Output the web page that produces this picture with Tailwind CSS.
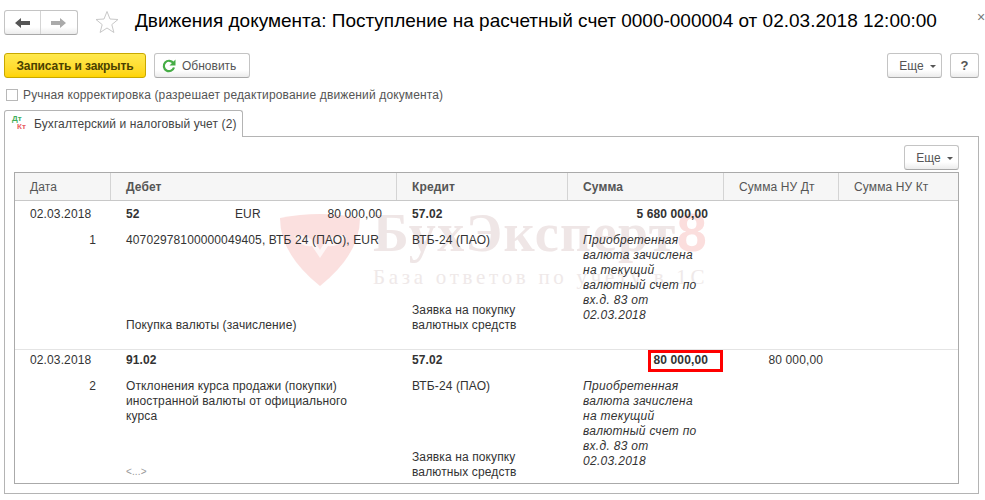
<!DOCTYPE html>
<html lang="ru">
  <head>
    <meta charset="UTF-8" />
    <title>Движения документа</title>
    <script src="https://cdn.jsdelivr.net/npm/@tailwindcss/browser@4"></script>
  </head>
  <body class="bg-white">
    <div class="relative w-[985px] h-[500px] overflow-hidden font-['Liberation_Sans',Arial,sans-serif] text-[12px] text-[#333]">
      <!-- title bar -->
      <div class="flex items-center h-[44px] pl-[4px] pt-[1px]">
        <div class="flex w-[74px] h-[25px] rounded-[3px] border border-[#c4c4c4] border-b-[#a8a8a8] bg-gradient-to-b from-white from-70% to-[#ececec]">
          <div class="flex items-center justify-center w-[36px] border-r border-[#d4d4d4]">
            <svg width="16" height="10" viewBox="0 0 16 10"><path d="M0 5 L6 0 V3 H15 V7 H6 V10 Z" fill="#555"/></svg>
          </div>
          <div class="flex items-center justify-center flex-1">
            <svg width="16" height="10" viewBox="0 0 16 10"><path d="M15 5 L9 0 V3 H0 V7 H9 V10 Z" fill="#aaa"/></svg>
          </div>
        </div>
        <svg class="ml-[17px] -mt-[2px]" width="24" height="24" viewBox="0 0 24 24"><path d="M12 1.500 L15 9 L23 9.500 L16.800 14.600 L18.900 22.500 L12 18 L5.100 22.500 L7.200 14.600 L1 9.500 L9 9 Z" fill="#fff" stroke="#c8c8c8"/></svg>
        <h1 class="ml-[16px] -mt-[3px] text-[19px] text-black whitespace-nowrap">Движения документа: Поступление на расчетный счет 0000-000004 от 02.03.2018 12:00:00</h1>
        <span class="absolute left-[977px] top-[9px] text-[14px] leading-[16px] text-[#777]">×</span>
      </div>

      <!-- command bar -->
      <div class="flex items-center h-[25px] mt-[9px] pl-[4px] pr-[6px]">
        <button class="w-[142px] h-[25px] rounded-[3px] border border-[#c8a800] bg-gradient-to-b from-[#ffe94d] to-[#ffd400] text-[12px] font-bold text-[#4a4100] tracking-[-0.1px]">Записать и закрыть</button>
        <button class="flex items-center ml-[8px] w-[96px] h-[25px] pl-[7px] rounded-[3px] border border-[#c4c4c4] border-b-[#a8a8a8] bg-gradient-to-b from-white from-70% to-[#ececec] text-[#555]">
          <svg width="14" height="14" viewBox="0 0 14 14"><path d="M11.300 4 A5.200 5.200 0 1 0 12 8.500" fill="none" stroke="#46ad46" stroke-width="2.200"/><path d="M13.500 0.500 V6.500 H7.500 Z" fill="#46ad46"/></svg>
          <span class="ml-[6px]">Обновить</span>
        </button>
        <button class="flex items-center justify-center ml-auto w-[55px] h-[25px] pl-[6px] rounded-[3px] border border-[#c4c4c4] border-b-[#a8a8a8] bg-gradient-to-b from-white from-70% to-[#ececec] text-[#555]">
          Еще
          <span class="ml-[6px] mt-[2px] border-x-[3px] border-x-transparent border-t-[3px] border-t-[#555]"></span>
        </button>
        <button class="ml-[8px] w-[29px] h-[25px] rounded-[3px] border border-[#c4c4c4] border-b-[#a8a8a8] bg-gradient-to-b from-white from-70% to-[#ececec] font-bold text-[13px] text-[#555]">?</button>
      </div>

      <!-- checkbox -->
      <label class="flex items-center h-[16px] mt-[9px] pl-[6px] text-[#555] tracking-[0.15px]">
        <span class="w-[12px] h-[12px] border border-[#b8b8b8] bg-white"></span>
        <span class="ml-[5px]">Ручная корректировка (разрешает редактирование движений документа)</span>
      </label>

      <!-- tab -->
      <div class="relative z-10 flex items-center mt-[7px] ml-[4px] w-[239px] h-[27px] pl-[7px] rounded-t-[3px] border border-b-0 border-[#b4b4b4] bg-white">
        <div class="w-[16px] font-bold text-[8px] leading-[8px] -mt-[2px]">
          <div class="text-[#3fae5a]">Дт</div>
          <div class="pl-[5px] text-[#e86060]">Кт</div>
        </div>
        <span class="ml-[6px] text-[#444] tracking-[0.1px]">Бухгалтерский и налоговый учет (2)</span>
      </div>

      <!-- panel -->
      <div class="-mt-px ml-[4px] w-[975px] h-[358px] border border-[#b4b4b4] pt-[8px] pl-[9px] pr-[19px]">
        <div class="flex justify-end h-[25px]">
          <button class="flex items-center justify-center w-[55px] h-[25px] pl-[6px] rounded-[3px] border border-[#c4c4c4] border-b-[#a8a8a8] bg-gradient-to-b from-white from-70% to-[#ececec] text-[#555]">
            Еще
            <span class="ml-[6px] mt-[2px] border-x-[3px] border-x-transparent border-t-[3px] border-t-[#555]"></span>
          </button>
        </div>

        <!-- table -->
        <div class="relative mt-[2px] w-[945px] h-[312px] border border-[#aaa] tracking-[0.12px]">
          <!-- watermark -->
          <div class="absolute left-[265px] top-[41px] pointer-events-none">
            <svg width="80" height="72" viewBox="0 0 80 72">
              <path d="M0 4 Q40 -4 80 4 Q80 40 40 72 Q0 40 0 4 Z" fill="#fbe0df"/>
              <path d="M14 22 Q30 18 40 36 Q50 18 66 22 Q58 34 48 32 L40 44 L32 32 Q22 34 14 22 Z" fill="#fff" opacity="0.7"/>
            </svg>
          </div>
          <div class="absolute left-[358px] top-[32px] pointer-events-none font-['Liberation_Serif',serif] whitespace-nowrap tracking-normal">
            <div class="font-bold text-[54px] leading-[54px] text-[#efe6e6] tracking-[1.4px]">БухЭксперт<span class="text-[#fbdedd] font-['Liberation_Sans',sans-serif]">8</span></div>
            <div class="mt-[5px] text-[21px] leading-[24px] text-[#efe9e9] tracking-[3.700px]">База ответов по учету в 1С</div>
          </div>

          <!-- header -->
          <div class="grid grid-cols-[96px_286px_171px_156px_115px_1fr] h-[28px] items-center bg-[#f6f6f6] border-b border-[#c8c8c8] text-[#555]">
            <div class="h-full flex items-center pl-[15px] border-r border-[#d4d4d4]">Дата</div>
            <div class="h-full flex items-center pl-[15px] border-r border-[#d4d4d4] font-bold">Дебет</div>
            <div class="h-full flex items-center pl-[15px] border-r border-[#d4d4d4] font-bold">Кредит</div>
            <div class="h-full flex items-center pl-[15px] border-r border-[#d4d4d4] font-bold">Сумма</div>
            <div class="h-full flex items-center pl-[15px] border-r border-[#d4d4d4]">Сумма НУ Дт</div>
            <div class="h-full flex items-center pl-[15px]">Сумма НУ Кт</div>
          </div>

          <!-- row 1 -->
          <div class="relative grid grid-cols-[96px_286px_171px_156px_115px_1fr] grid-rows-[26px_1fr] h-[149px] border-b border-[#e4e4e4] leading-[15px]">
            <div class="pl-[15px] pt-[6px]">02.03.2018</div>
            <div class="flex pl-[15px] pt-[6px] pr-[15px]">
              <span class="font-bold w-[109px]">52</span>
              <span>EUR</span>
              <span class="ml-auto">80 000,00</span>
            </div>
            <div class="pl-[15px] pt-[6px] font-bold">57.02</div>
            <div class="pr-[16px] pt-[6px] text-right font-bold">5 680 000,00</div>
            <div></div>
            <div></div>
            <div class="pt-[6px] pr-[15px] text-right">1</div>
            <div class="flex flex-col justify-between pl-[15px] pt-[6px] pb-[16px]">
              <span>40702978100000049405, ВТБ 24 (ПАО), EUR</span>
              <span>Покупка валюты (зачисление)</span>
            </div>
            <div class="flex flex-col justify-between pl-[15px] pt-[6px] pb-[16px]">
              <span>ВТБ-24 (ПАО)</span>
              <span>Заявка на покупку<br />валютных средств</span>
            </div>
            <div class="pl-[15px] pt-[6px] italic tracking-[0.3px]">Приобретенная<br />валюта зачислена<br />на текущий<br />валютный счет по<br />вх.д. 83 от<br />02.03.2018</div>
          </div>

          <!-- row 2 -->
          <div class="relative grid grid-cols-[96px_286px_171px_156px_115px_1fr] grid-rows-[27px_1fr] h-[134px] leading-[15px]">
            <div class="pl-[15px] pt-[3px]">02.03.2018</div>
            <div class="pl-[15px] pt-[3px] font-bold">91.02</div>
            <div class="pl-[15px] pt-[3px] font-bold">57.02</div>
            <div class="relative pr-[16px] pt-[3px] text-right font-bold">
              80 000,00
              <span class="absolute left-[80px] top-0 w-[75px] h-[22px] border-[3px] border-[#ff0000]"></span>
            </div>
            <div class="pr-[16px] pt-[3px] text-right">80 000,00</div>
            <div></div>
            <div class="pt-[2px] pr-[15px] text-right">2</div>
            <div class="flex flex-col justify-between pl-[15px] pt-[2px] pb-[5px]">
              <span>Отклонения курса продажи (покупки)<br />иностранной валюты от официального<br />курса</span>
              <span class="text-[10px] text-[#999]">&lt;...&gt;</span>
            </div>
            <div class="flex flex-col justify-between pl-[15px] pt-[2px] pb-[4px]">
              <span>ВТБ-24 (ПАО)</span>
              <span>Заявка на покупку<br />валютных средств</span>
            </div>
            <div class="pl-[15px] pt-[2px] italic tracking-[0.3px]">Приобретенная<br />валюта зачислена<br />на текущий<br />валютный счет по<br />вх.д. 83 от<br />02.03.2018</div>
          </div>
        </div>
      </div>
    </div>
  </body>
</html>
